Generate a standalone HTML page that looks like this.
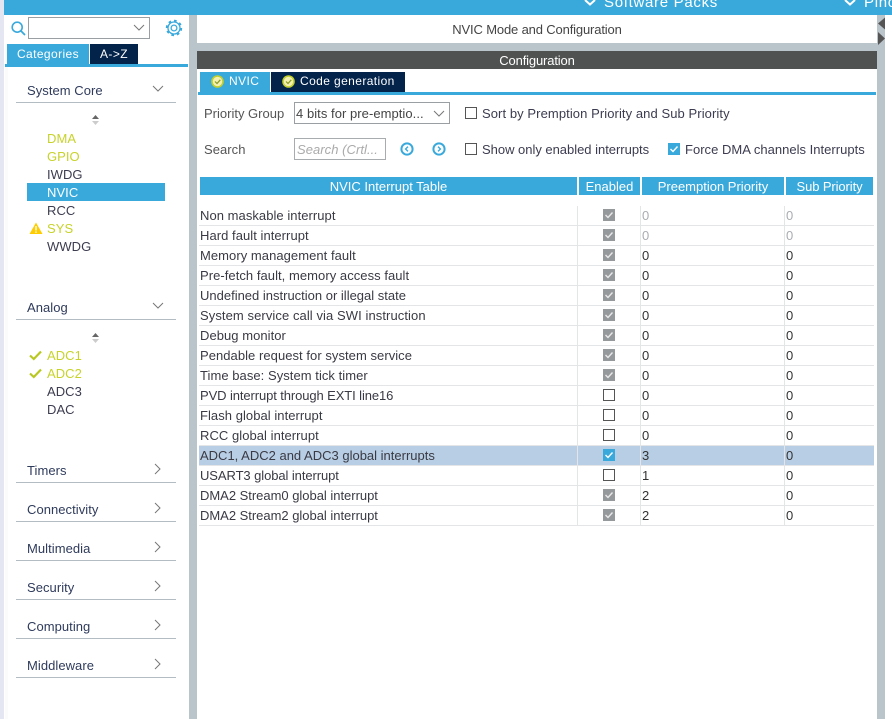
<!DOCTYPE html>
<html><head><meta charset="utf-8">
<style>
html,body{margin:0;padding:0;background:#fff}
body{width:892px;height:719px;position:relative;overflow:hidden;font-family:"Liberation Sans",sans-serif;font-size:13px;color:#3c3c50}
.a{position:absolute}
.t{position:absolute;white-space:nowrap;line-height:20px;height:18px;letter-spacing:.05px}
.hl{position:absolute;left:16px;width:160px;height:1px;background:#b3bcc2}
.y{color:#c7d32b}
.cat{color:#2f3b5c}
.hd{position:absolute;top:177px;height:18px;background:#39a9dc;color:#fff;text-align:center;line-height:19px;letter-spacing:0}
.r{position:absolute;left:199px;width:675px;height:19px;border-bottom:1px solid #e3e5e6}
.r.s{background:#b8cee4}
.r .n{position:absolute;left:1px;top:0;line-height:19px;white-space:nowrap;letter-spacing:.05px;color:#3a3a44}
.r .v1,.r .v2{position:absolute;top:0;line-height:19px;color:#333}
.r .v1{left:443px}.r .v2{left:587px}
.r .d1,.r .d2,.r .d3{position:absolute;top:0;width:1px;height:20px;background:#e3e5e6}
.r .d1{left:378px}.r .d2{left:441px}.r .d3{left:585px}
.r .c{position:absolute;left:404px;top:3px}
.g{color:#a9adb0!important}
.tab{position:absolute;color:#fff;font-size:12px;letter-spacing:.4px}
</style></head><body>

<div class="a" style="left:0;top:0;width:4px;height:719px;background:#e4e6f2"></div>
<div class="a" style="left:4px;top:0;width:888px;height:15px;background:#39a9dc"></div>
<div class="t" style="left:604px;top:-6px;color:#fff;font-size:15px;letter-spacing:.7px;line-height:18px">Software Packs</div>
<div class="t" style="left:864px;top:-6px;color:#fff;font-size:15px;letter-spacing:.7px;line-height:18px">Pinout</div>
<svg class="a" style="left:583px;top:0" width="14" height="6"><path d="M2 0 L7 4.5 L12 0" fill="none" stroke="#fff" stroke-width="2"/></svg>
<svg class="a" style="left:843px;top:0" width="14" height="6"><path d="M2 0 L7 4.5 L12 0" fill="none" stroke="#fff" stroke-width="2"/></svg>

<div class="a" style="left:189px;top:15px;width:8px;height:704px;background:#b9c4cb"></div>
<div class="a" style="left:197px;top:43px;width:680px;height:8px;background:#b9c4cb"></div>
<div class="a" style="left:877px;top:15px;width:8px;height:704px;background:#b9c4cb"></div>
<div class="a" style="left:5px;top:66px;width:181px;height:653px;background:#fbfbfb"></div>
<div class="a" style="left:8px;top:67px;width:178px;height:652px;background:#fff"></div>

<svg class="a" style="left:11px;top:21px" width="15" height="15"><circle cx="6.2" cy="6.2" r="5" fill="none" stroke="#39a9dc" stroke-width="1.6"/><path d="M9.8 9.8 L14 14" stroke="#39a9dc" stroke-width="1.8"/></svg>
<div class="a" style="left:28px;top:17px;width:120px;height:20px;border:1px solid #9a9fa3"></div>
<svg class="a" style="left:133px;top:24px" width="12" height="8"><path d="M1 1 L6 6 L11 1" fill="none" stroke="#777" stroke-width="1"/></svg>
<svg class="a" style="left:165px;top:19px" width="18" height="18" viewBox="0 0 18 18"><circle cx="9" cy="9" r="2.9" fill="none" stroke="#39a9dc" stroke-width="1.3"/><circle cx="9" cy="9" r="6" fill="none" stroke="#39a9dc" stroke-width="1.3"/><circle cx="9" cy="9" r="7.3" fill="none" stroke="#39a9dc" stroke-width="1.8" stroke-dasharray="2.7 3"/></svg>

<div class="a tab" style="left:7px;top:44px;width:82px;height:20px;background:#39a9dc;text-align:center;line-height:20px">Categories</div>
<div class="a tab" style="left:90px;top:44px;width:48px;height:20px;background:#03234b;text-align:center;line-height:20px">A-&gt;Z</div>
<div class="a" style="left:5px;top:64px;width:183px;height:3px;background:#39a9dc"></div>

<div class="t cat" style="left:27px;top:81px">System Core</div>
<svg class="a" style="left:152px;top:85px" width="12" height="8"><path d="M1 1 L6 6 L11 1" fill="none" stroke="#777" stroke-width="1"/></svg>
<div class="hl" style="top:102px"></div>
<svg class="a" style="left:91px;top:114px" width="10" height="12"><path d="M1 5 L4.5 1 L8 5Z" fill="#666"/><path d="M1 7 L4.5 11 L8 7Z" fill="#ccc"/></svg>
<div class="t y" style="left:47px;top:129px">DMA</div>
<div class="t y" style="left:47px;top:147px">GPIO</div>
<div class="t" style="left:47px;top:165px">IWDG</div>
<div class="a" style="left:27px;top:183px;width:138px;height:18px;background:#39a9dc"></div>
<div class="t" style="left:47px;top:183px;color:#fff">NVIC</div>
<div class="t" style="left:47px;top:201px">RCC</div>
<svg class="a" style="left:29px;top:222px" width="14" height="12"><path d="M7 0.5 L13.5 12 L0.5 12Z" fill="#ffcc00"/><rect x="6.3" y="4" width="1.4" height="4.5" fill="#fff"/><rect x="6.3" y="9.4" width="1.4" height="1.4" fill="#fff"/></svg>
<div class="t y" style="left:47px;top:219px">SYS</div>
<div class="t" style="left:47px;top:237px">WWDG</div>

<div class="t cat" style="left:27px;top:298px">Analog</div>
<svg class="a" style="left:152px;top:302px" width="12" height="8"><path d="M1 1 L6 6 L11 1" fill="none" stroke="#777" stroke-width="1"/></svg>
<div class="hl" style="top:319px"></div>
<svg class="a" style="left:91px;top:332px" width="10" height="12"><path d="M1 5 L4.5 1 L8 5Z" fill="#666"/><path d="M1 7 L4.5 11 L8 7Z" fill="#ccc"/></svg>
<svg class="a" style="left:29px;top:350px" width="13" height="11"><path d="M1 5.5 L4.8 9 L12 1.5" fill="none" stroke="#b8c820" stroke-width="2.2"/></svg>
<svg class="a" style="left:29px;top:368px" width="13" height="11"><path d="M1 5.5 L4.8 9 L12 1.5" fill="none" stroke="#b8c820" stroke-width="2.2"/></svg>
<div class="t y" style="left:47px;top:346px">ADC1</div>
<div class="t y" style="left:47px;top:364px">ADC2</div>
<div class="t" style="left:47px;top:382px">ADC3</div>
<div class="t" style="left:47px;top:400px">DAC</div>

<div class="t cat" style="left:27px;top:461px">Timers</div><div class="hl" style="top:482px"></div>
<div class="t cat" style="left:27px;top:500px">Connectivity</div><div class="hl" style="top:521px"></div>
<div class="t cat" style="left:27px;top:539px">Multimedia</div><div class="hl" style="top:560px"></div>
<div class="t cat" style="left:27px;top:578px">Security</div><div class="hl" style="top:599px"></div>
<div class="t cat" style="left:27px;top:617px">Computing</div><div class="hl" style="top:638px"></div>
<div class="t cat" style="left:27px;top:656px">Middleware</div><div class="hl" style="top:677px"></div>
<svg class="a" style="left:154px;top:463px" width="8" height="12"><path d="M1 1 L6 6 L1 11" fill="none" stroke="#777" stroke-width="1"/></svg>
<svg class="a" style="left:154px;top:502px" width="8" height="12"><path d="M1 1 L6 6 L1 11" fill="none" stroke="#777" stroke-width="1"/></svg>
<svg class="a" style="left:154px;top:541px" width="8" height="12"><path d="M1 1 L6 6 L1 11" fill="none" stroke="#777" stroke-width="1"/></svg>
<svg class="a" style="left:154px;top:580px" width="8" height="12"><path d="M1 1 L6 6 L1 11" fill="none" stroke="#777" stroke-width="1"/></svg>
<svg class="a" style="left:154px;top:619px" width="8" height="12"><path d="M1 1 L6 6 L1 11" fill="none" stroke="#777" stroke-width="1"/></svg>
<svg class="a" style="left:154px;top:658px" width="8" height="12"><path d="M1 1 L6 6 L1 11" fill="none" stroke="#777" stroke-width="1"/></svg>

<div class="a" style="left:197px;top:15px;width:680px;height:28px;text-align:center;line-height:29px;letter-spacing:-.15px;color:#444">NVIC Mode and Configuration</div>
<svg class="a" style="left:877px;top:17px" width="10" height="30"><path d="M8 0.5 L1 6.5 L8 12.5Z" fill="#555"/><path d="M1 15 L8 21.5 L1 28Z" fill="#555"/></svg>

<div class="a" style="left:197px;top:51px;width:680px;height:18px;background:#505151;color:#fff;text-align:center;line-height:19px;letter-spacing:-.15px">Configuration</div>

<div class="a tab" style="left:200px;top:72px;width:70px;height:20px;background:#39a9dc;line-height:19px"><span style="position:absolute;left:29px">NVIC</span></div>
<div class="a tab" style="left:271px;top:72px;width:134px;height:20px;background:#03234b;line-height:19px"><span style="position:absolute;left:29px;white-space:nowrap">Code generation</span></div>
<svg class="a" style="left:211px;top:75px" width="13" height="13"><circle cx="6.5" cy="6.5" r="5.5" fill="#f3f0b0" stroke="#c3cf2a" stroke-width="1.6"/><path d="M4 6.5 L6 8.5 L9.3 4.8" fill="none" stroke="#8a9a20" stroke-width="1.2"/></svg>
<svg class="a" style="left:282px;top:75px" width="13" height="13"><circle cx="6.5" cy="6.5" r="5.5" fill="#f3f0b0" stroke="#c3cf2a" stroke-width="1.6"/><path d="M4 6.5 L6 8.5 L9.3 4.8" fill="none" stroke="#8a9a20" stroke-width="1.2"/></svg>
<div class="a" style="left:198px;top:92px;width:678px;height:3px;background:#39a9dc"></div>

<div class="t" style="left:204px;top:104px;color:#555;letter-spacing:0">Priority Group</div>
<div class="a" style="left:294px;top:102px;width:154px;height:20px;border:1px solid #9a9fa3"></div>
<div class="t" style="left:296px;top:104px;color:#444">4 bits for pre-emptio...</div>
<svg class="a" style="left:433px;top:110px" width="12" height="8"><path d="M1 1 L6 6 L11 1" fill="none" stroke="#777" stroke-width="1"/></svg>
<div class="a" style="left:465px;top:107px;width:10px;height:10px;border:1px solid #555"></div>
<div class="t" style="left:482px;top:104px;letter-spacing:.08px">Sort by Premption Priority and Sub Priority</div>

<div class="t" style="left:204px;top:140px;color:#555">Search</div>
<div class="a" style="left:294px;top:138px;width:90px;height:20px;border:1px solid #a8acaf"></div>
<div class="t" style="left:297px;top:140px;color:#aaa;font-style:italic">Search (Crtl...</div>
<svg class="a" style="left:400px;top:142px" width="14" height="14"><circle cx="7" cy="7" r="5.6" fill="none" stroke="#39a9dc" stroke-width="2"/><path d="M8 4.6 L5.6 7 L8 9.4" fill="none" stroke="#39a9dc" stroke-width="1.4"/></svg>
<svg class="a" style="left:432px;top:142px" width="14" height="14"><circle cx="7" cy="7" r="5.6" fill="none" stroke="#39a9dc" stroke-width="2"/><path d="M6 4.6 L8.4 7 L6 9.4" fill="none" stroke="#39a9dc" stroke-width="1.4"/></svg>
<div class="a" style="left:465px;top:143px;width:10px;height:10px;border:1px solid #555"></div>
<div class="t" style="left:482px;top:140px;letter-spacing:-.02px">Show only enabled interrupts</div>
<svg class="a" style="left:668px;top:143px" width="12" height="12"><rect width="12" height="12" fill="#39a9dc"/><path d="M2.5 6 L5 8.5 L9.5 3.5" fill="none" stroke="#fff" stroke-width="1.4"/></svg>
<div class="t" style="left:685px;top:140px;letter-spacing:.02px">Force DMA channels Interrupts</div>

<div class="hd" style="left:200px;width:377px">NVIC Interrupt Table</div>
<div class="hd" style="left:579px;width:61px">Enabled</div>
<div class="hd" style="left:642px;width:142px">Preemption Priority</div>
<div class="hd" style="left:786px;width:87px;letter-spacing:-.1px">Sub Priority</div>

<div class="r" style="top:206px"><span class="n">Non maskable interrupt</span><i class="d1"></i><i class="d2"></i><i class="d3"></i><svg class="c" width="12" height="12"><rect width="12" height="12" fill="#96999c"/><path d="M2.5 6 L5 8.5 L9.5 3.5" fill="none" stroke="#e8e8e8" stroke-width="1.4"/></svg><span class="v1 g">0</span><span class="v2 g">0</span></div>
<div class="r" style="top:226px"><span class="n">Hard fault interrupt</span><i class="d1"></i><i class="d2"></i><i class="d3"></i><svg class="c" width="12" height="12"><rect width="12" height="12" fill="#96999c"/><path d="M2.5 6 L5 8.5 L9.5 3.5" fill="none" stroke="#e8e8e8" stroke-width="1.4"/></svg><span class="v1 g">0</span><span class="v2 g">0</span></div>
<div class="r" style="top:246px"><span class="n">Memory management fault</span><i class="d1"></i><i class="d2"></i><i class="d3"></i><svg class="c" width="12" height="12"><rect width="12" height="12" fill="#96999c"/><path d="M2.5 6 L5 8.5 L9.5 3.5" fill="none" stroke="#e8e8e8" stroke-width="1.4"/></svg><span class="v1">0</span><span class="v2">0</span></div>
<div class="r" style="top:266px"><span class="n">Pre-fetch fault, memory access fault</span><i class="d1"></i><i class="d2"></i><i class="d3"></i><svg class="c" width="12" height="12"><rect width="12" height="12" fill="#96999c"/><path d="M2.5 6 L5 8.5 L9.5 3.5" fill="none" stroke="#e8e8e8" stroke-width="1.4"/></svg><span class="v1">0</span><span class="v2">0</span></div>
<div class="r" style="top:286px"><span class="n" style="letter-spacing:0">Undefined instruction or illegal state</span><i class="d1"></i><i class="d2"></i><i class="d3"></i><svg class="c" width="12" height="12"><rect width="12" height="12" fill="#96999c"/><path d="M2.5 6 L5 8.5 L9.5 3.5" fill="none" stroke="#e8e8e8" stroke-width="1.4"/></svg><span class="v1">0</span><span class="v2">0</span></div>
<div class="r" style="top:306px"><span class="n" style="letter-spacing:.08px">System service call via SWI instruction</span><i class="d1"></i><i class="d2"></i><i class="d3"></i><svg class="c" width="12" height="12"><rect width="12" height="12" fill="#96999c"/><path d="M2.5 6 L5 8.5 L9.5 3.5" fill="none" stroke="#e8e8e8" stroke-width="1.4"/></svg><span class="v1">0</span><span class="v2">0</span></div>
<div class="r" style="top:326px"><span class="n">Debug monitor</span><i class="d1"></i><i class="d2"></i><i class="d3"></i><svg class="c" width="12" height="12"><rect width="12" height="12" fill="#96999c"/><path d="M2.5 6 L5 8.5 L9.5 3.5" fill="none" stroke="#e8e8e8" stroke-width="1.4"/></svg><span class="v1">0</span><span class="v2">0</span></div>
<div class="r" style="top:346px"><span class="n">Pendable request for system service</span><i class="d1"></i><i class="d2"></i><i class="d3"></i><svg class="c" width="12" height="12"><rect width="12" height="12" fill="#96999c"/><path d="M2.5 6 L5 8.5 L9.5 3.5" fill="none" stroke="#e8e8e8" stroke-width="1.4"/></svg><span class="v1">0</span><span class="v2">0</span></div>
<div class="r" style="top:366px"><span class="n">Time base: System tick timer</span><i class="d1"></i><i class="d2"></i><i class="d3"></i><svg class="c" width="12" height="12"><rect width="12" height="12" fill="#96999c"/><path d="M2.5 6 L5 8.5 L9.5 3.5" fill="none" stroke="#e8e8e8" stroke-width="1.4"/></svg><span class="v1">0</span><span class="v2">0</span></div>
<div class="r" style="top:386px"><span class="n" style="letter-spacing:-.1px">PVD interrupt through EXTI line16</span><i class="d1"></i><i class="d2"></i><i class="d3"></i><svg class="c" width="12" height="12"><rect x=".5" y=".5" width="11" height="11" fill="#fff" stroke="#555"/></svg><span class="v1">0</span><span class="v2">0</span></div>
<div class="r" style="top:406px"><span class="n">Flash global interrupt</span><i class="d1"></i><i class="d2"></i><i class="d3"></i><svg class="c" width="12" height="12"><rect x=".5" y=".5" width="11" height="11" fill="#fff" stroke="#555"/></svg><span class="v1">0</span><span class="v2">0</span></div>
<div class="r" style="top:426px"><span class="n">RCC global interrupt</span><i class="d1"></i><i class="d2"></i><i class="d3"></i><svg class="c" width="12" height="12"><rect x=".5" y=".5" width="11" height="11" fill="#fff" stroke="#555"/></svg><span class="v1">0</span><span class="v2">0</span></div>
<div class="r s" style="top:446px"><span class="n" style="letter-spacing:0">ADC1, ADC2 and ADC3 global interrupts</span><i class="d1"></i><i class="d2"></i><i class="d3"></i><svg class="c" width="12" height="12"><rect width="12" height="12" fill="#39a9dc"/><path d="M2.5 6 L5 8.5 L9.5 3.5" fill="none" stroke="#fff" stroke-width="1.4"/></svg><span class="v1">3</span><span class="v2">0</span></div>
<div class="r" style="top:466px"><span class="n" style="letter-spacing:-.08px">USART3 global interrupt</span><i class="d1"></i><i class="d2"></i><i class="d3"></i><svg class="c" width="12" height="12"><rect x=".5" y=".5" width="11" height="11" fill="#fff" stroke="#555"/></svg><span class="v1">1</span><span class="v2">0</span></div>
<div class="r" style="top:486px"><span class="n" style="letter-spacing:-.02px">DMA2 Stream0 global interrupt</span><i class="d1"></i><i class="d2"></i><i class="d3"></i><svg class="c" width="12" height="12"><rect width="12" height="12" fill="#96999c"/><path d="M2.5 6 L5 8.5 L9.5 3.5" fill="none" stroke="#e8e8e8" stroke-width="1.4"/></svg><span class="v1">2</span><span class="v2">0</span></div>
<div class="r" style="top:506px"><span class="n" style="letter-spacing:-.02px">DMA2 Stream2 global interrupt</span><i class="d1"></i><i class="d2"></i><i class="d3"></i><svg class="c" width="12" height="12"><rect width="12" height="12" fill="#96999c"/><path d="M2.5 6 L5 8.5 L9.5 3.5" fill="none" stroke="#e8e8e8" stroke-width="1.4"/></svg><span class="v1">2</span><span class="v2">0</span></div>

</body></html>
